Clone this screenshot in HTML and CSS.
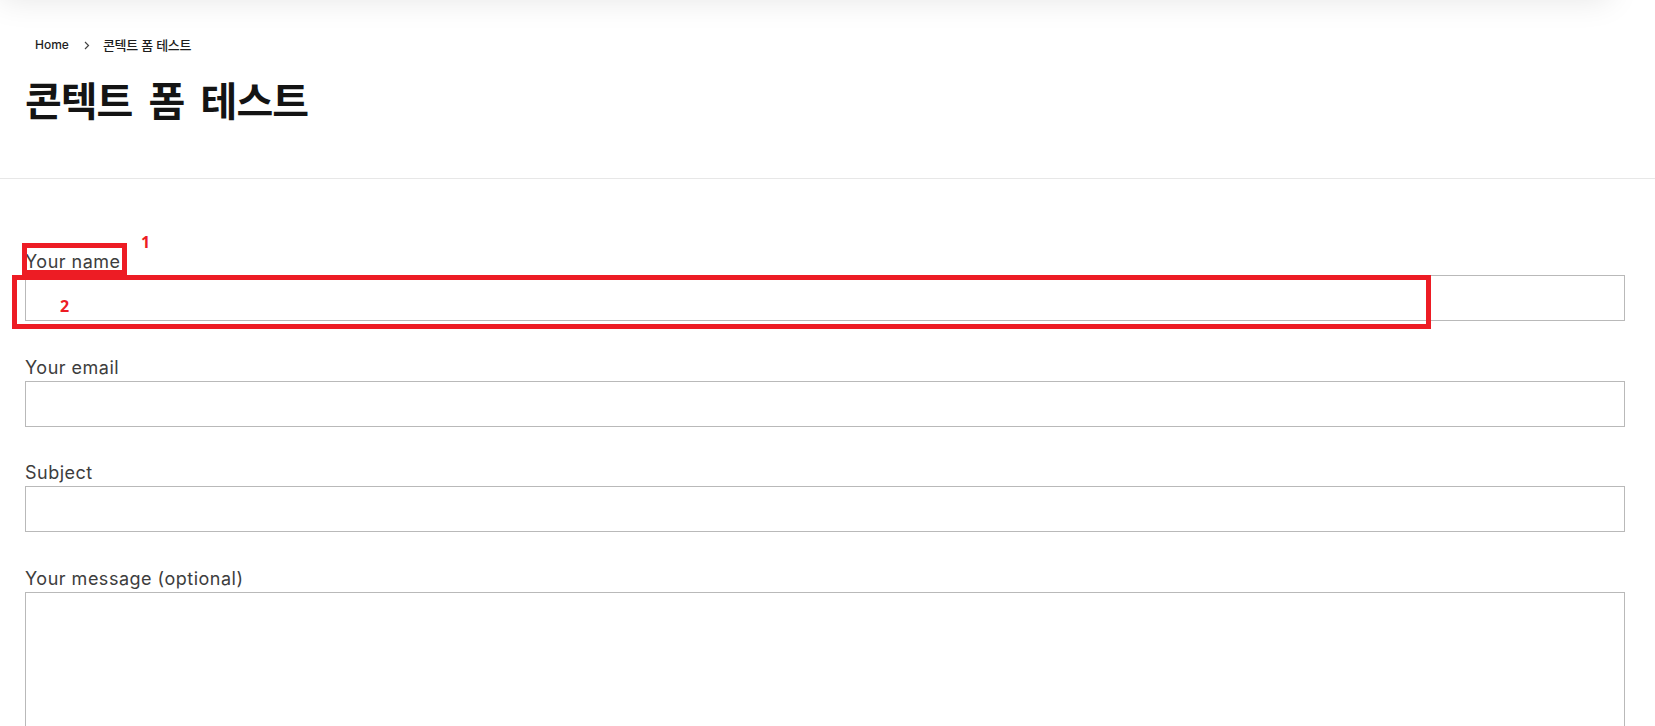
FILE: index.html
```html
<!DOCTYPE html>
<html lang="ko">
<head>
<meta charset="utf-8">
<title>콘텍트 폼 테스트</title>
<link rel="stylesheet" href="styles.css">
</head>
<body>
<div class="site-header"></div>
<section class="page-head">
  <nav class="breadcrumb">
    <a class="crumb-link" href="#">Home</a>
    <svg class="crumb-sep" width="6" height="9" viewBox="0 0 6 9"><path d="M1 1l3.5 3.5L1 8" fill="none" stroke="#444" stroke-width="1.2"/></svg>
    <span class="crumb-current">콘텍트 폼 테스트</span>
  </nav>
  <h1 class="page-title">콘텍트 폼 테스트</h1>
</section>
<main class="content">
  <form class="contact-form">
    <div class="field">
      <label class="field-label">Your name</label>
      <input class="field-input" type="text">
    </div>
    <div class="field">
      <label class="field-label">Your email</label>
      <input class="field-input" type="email">
    </div>
    <div class="field">
      <label class="field-label">Subject</label>
      <input class="field-input" type="text">
    </div>
    <div class="field">
      <label class="field-label">Your message (optional)</label>
      <textarea class="field-textarea"></textarea>
    </div>
  </form>
</main>
<div class="mark mark-box mark-box-1"></div>
<div class="mark mark-box mark-box-2"></div>
<div class="mark mark-num mark-num-1">1</div>
<div class="mark mark-num mark-num-2">2</div>
</body>
</html>
```

FILE: styles.css
```css
html, body {
  margin: 0;
  padding: 0;
  background: #fff;
}
body {
  font-family: Inter, "Noto Sans CJK KR", sans-serif;
  color: #3d3d3d;
  position: relative;
  overflow: hidden;
  height: 726px;
}
.site-header {
  height: 100px;
  margin-top: -100px;
  margin-right: 45px;
  box-shadow: 0 0 30px rgba(0, 0, 0, 0.1);
  background: #fff;
}
.page-head {
  padding: 36px 25px 55px;
  border-bottom: 1px solid #e7e7e7;
}
.breadcrumb {
  display: flex;
  align-items: center;
  padding-left: 10px;
  height: 18px;
  font-size: 12px;
  line-height: 18px;
  color: #1e1e1e;
}
.crumb-link {
  color: #1e1e1e;
  text-decoration: none;
  font-weight: 500;
}
.crumb-sep {
  margin: 0 13px 0 15px;
}
.crumb-current {
  font-family: "Noto Sans CJK KR", sans-serif;
  font-size: 13px;
  letter-spacing: -0.3px;
  word-spacing: 0;
  font-weight: 500;
}
.page-title {
  margin: 21px 0 0;
  font-family: "Noto Sans CJK KR", sans-serif;
  font-size: 40px;
  line-height: 48px;
  font-weight: 700;
  letter-spacing: -1px;
  word-spacing: 6px;
  color: #141414;
}
.content {
  padding: 69px 0 0 25px;
}
.field {
  margin-bottom: 32.67px;
}
.field-label {
  display: block;
  font-size: 18px;
  line-height: 27px;
  letter-spacing: 0.5px;
  color: #3d3d3d;
}
.field-input, .field-textarea {
  display: block;
  box-sizing: border-box;
  width: 1600px;
  height: 46px;
  margin: 0;
  border: 1px solid #b9b9b9;
  border-radius: 0;
  background: #fff;
  font: inherit;
  outline: none;
}
.field-textarea {
  height: 260px;
  resize: none;
}
.mark {
  position: absolute;
}
.mark-box {
  border: 5px solid #ed1c24;
  box-sizing: border-box;
}
.mark-box-1 {
  left: 22px;
  top: 243px;
  width: 105px;
  height: 32px;
}
.mark-box-2 {
  left: 12px;
  top: 275px;
  width: 1419px;
  height: 54px;
}
.mark-num {
  font-family: "Open Sans", sans-serif;
  font-weight: 700;
  font-size: 16px;
  line-height: 20px;
  color: #ed1c24;
}
.mark-num-1 {
  left: 141px;
  top: 232px;
}
.mark-num-2 {
  left: 60px;
  top: 296px;
}
```
